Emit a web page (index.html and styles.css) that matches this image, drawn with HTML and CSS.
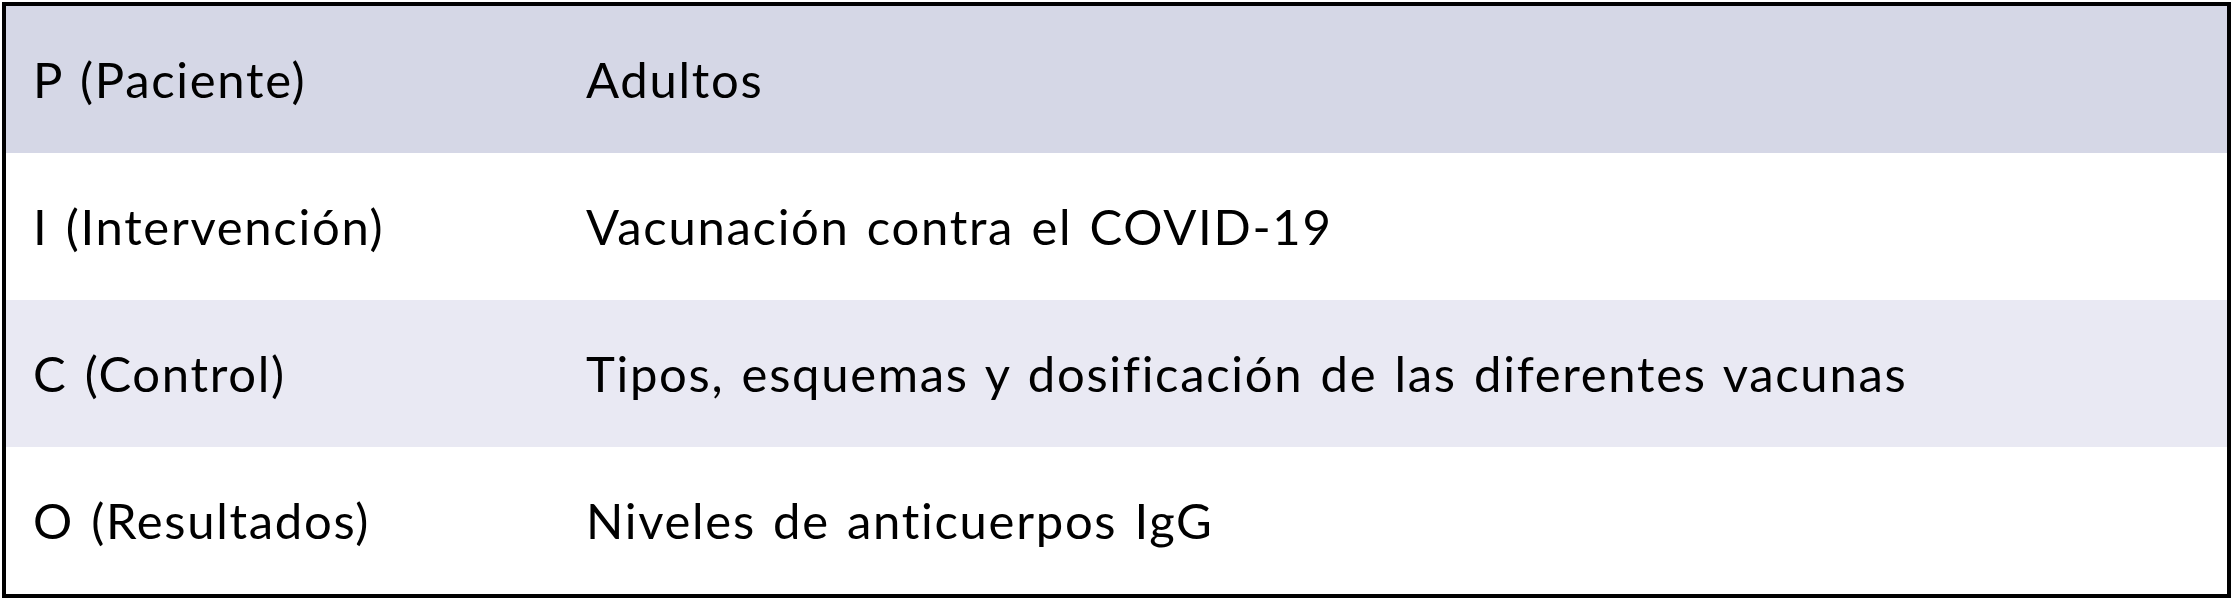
FILE: index.html
```html
<!DOCTYPE html>
<html lang="es">
<head>
<meta charset="utf-8">
<title>PICO</title>
<link rel="stylesheet" href="styles.css">
</head>
<body>
<table class="pico">
  <tbody>
    <tr class="row row-dark">
      <td class="cell cell-key">P (Paciente)</td>
      <td class="cell cell-val">Adultos</td>
    </tr>
    <tr class="row row-white">
      <td class="cell cell-key">I (Intervención)</td>
      <td class="cell cell-val">Vacunación contra el COVID-19</td>
    </tr>
    <tr class="row row-light">
      <td class="cell cell-key">C (Control)</td>
      <td class="cell cell-val">Tipos, esquemas y dosificación de las diferentes vacunas</td>
    </tr>
    <tr class="row row-white">
      <td class="cell cell-key">O (Resultados)</td>
      <td class="cell cell-val">Niveles de anticuerpos IgG</td>
    </tr>
  </tbody>
</table>
</body>
</html>
```

FILE: styles.css
```css
html, body {
  margin: 0;
  padding: 0;
  background: #ffffff;
}
body {
  padding: 2px 0 0 2px;
  font-family: Lato, "Liberation Sans", sans-serif;
  color: #000000;
}
.pico {
  width: 2229px;
  border: 4px solid #000000;
  border-collapse: separate;
  border-spacing: 0;
  table-layout: fixed;
  box-sizing: border-box;
}
.row {
  height: 147px;
}
.row-dark { background: #d5d7e6; }
.row-white { background: #ffffff; }
.row-light { background: #e9e9f3; }
.cell {
  padding: 0 27px;
  font-size: 49px;
  line-height: 1;
  letter-spacing: 1.7px;
  word-spacing: 3px;
  vertical-align: middle;
  white-space: nowrap;
}
.cell-key {
  width: 499px;
}
```
